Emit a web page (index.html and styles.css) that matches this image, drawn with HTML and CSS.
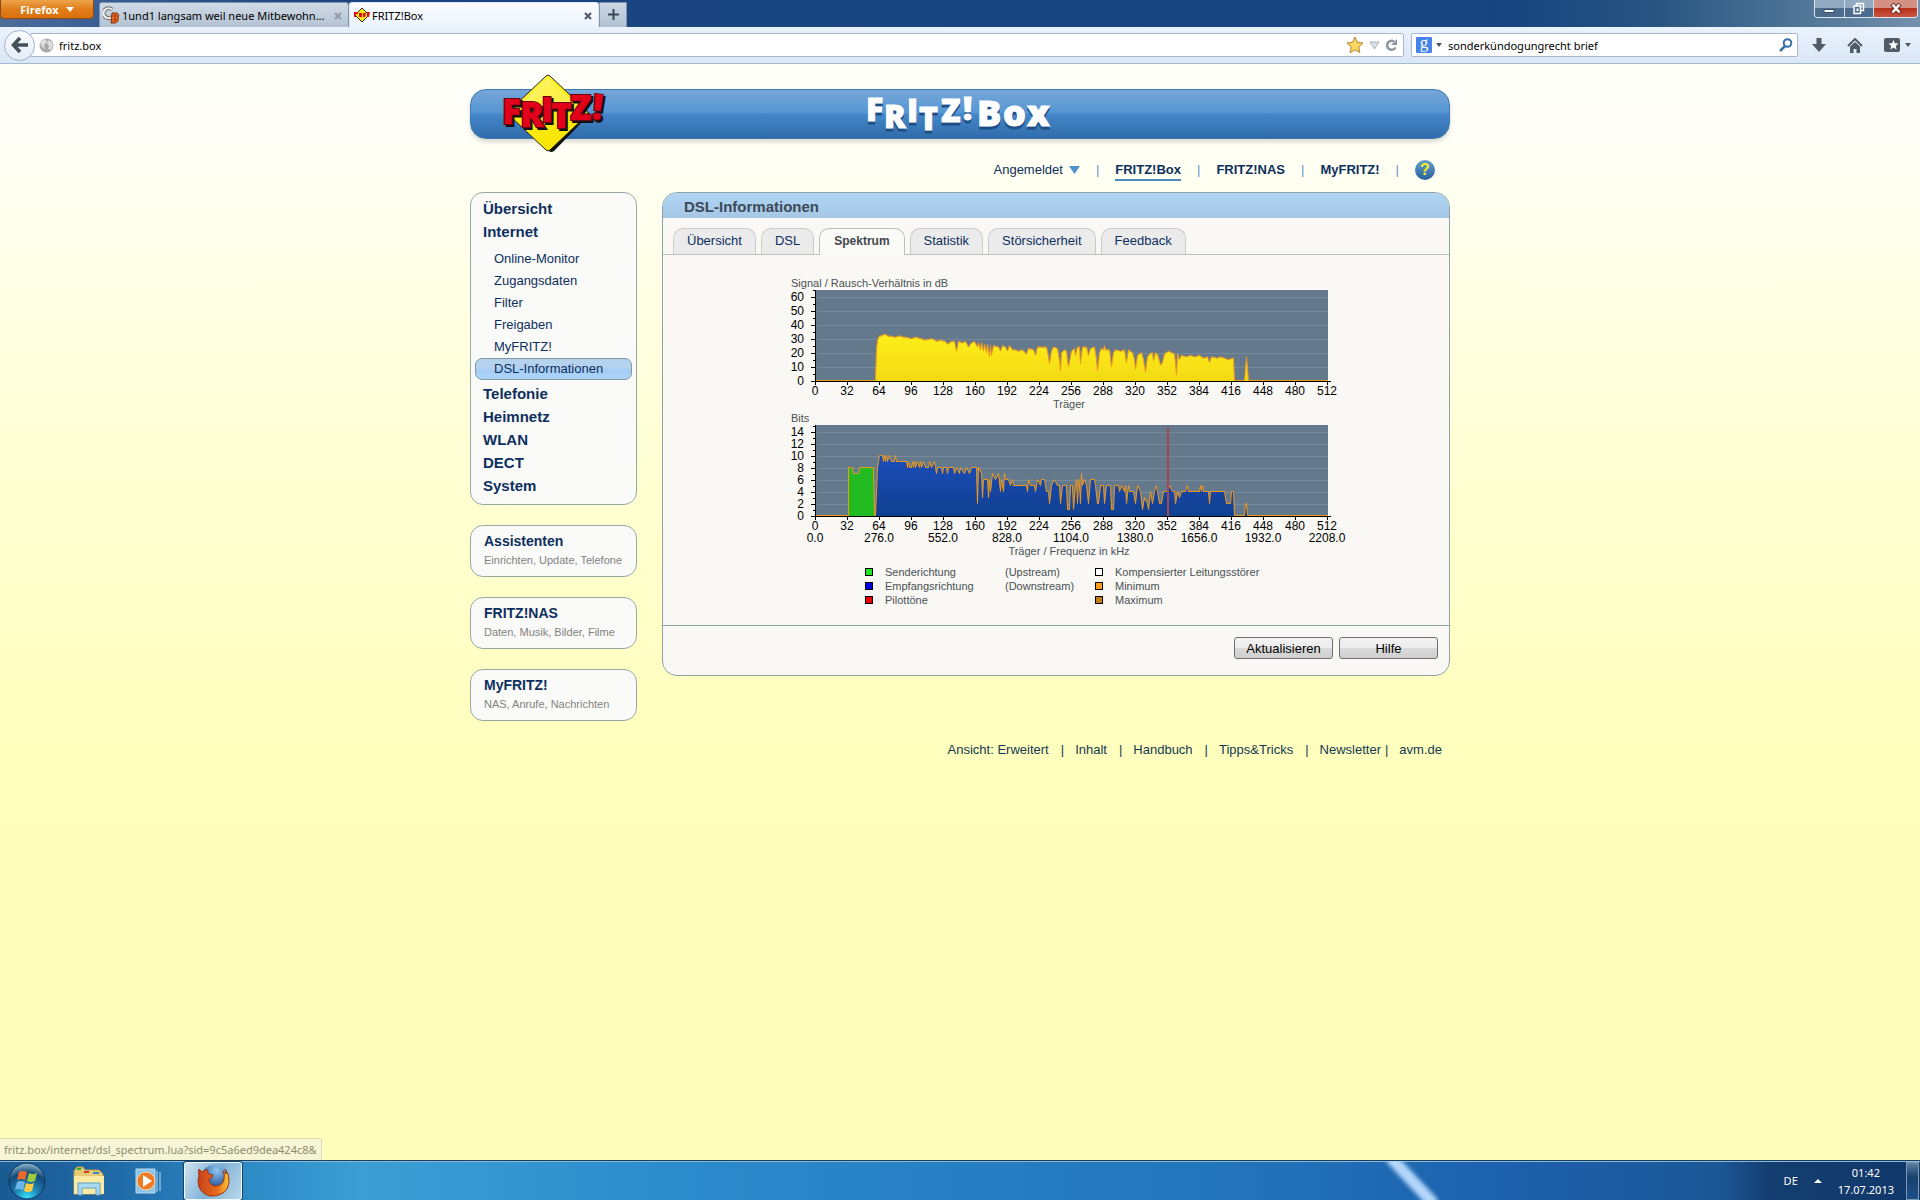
FILE: index.html
```html
<!DOCTYPE html>
<html lang="de">
<head>
    <meta charset="UTF-8">
    <meta name="viewport" content="width=device-width, initial-scale=1.0">
    <title>FRITZ!Box</title>
    <link rel="stylesheet" href="styles.css">
</head>
<body>
    <header class="browser">
        <div class="titlebar">
            <button class="firefox-btn" type="button">Firefox <i class="caret"></i></button>
            <div class="tabs">
                <div class="tab">
                    <svg width="18" height="18" viewBox="0 0 18 18">
                        <path d="M9 3.500A5 5 0 1 0 9 11" fill="none" stroke="#666" stroke-width="4"/>
                        <path d="M9 3.500A5 5 0 1 0 9 11" fill="none" stroke="#f4f4f4" stroke-width="2"/>
                        <path d="M9 7h5q3 2 1 5q1 4-3 5H8z" fill="#e2601c" stroke="#7b3410"/>
                        <path d="M11 10h2M11 13.500h2" stroke="#7b3410" stroke-width="1.500"/>
                    </svg>
                    <span class="tab-name">1und1 langsam weil neue Mitbewohn...</span>
                    <button class="tab-close" type="button" aria-label="Tab schließen"><svg width="8" height="8" viewBox="0 0 8 8"><path d="M1 1l6 6M7 1L1 7"/></svg></button>
                </div>
                <div class="tab on">
                    <svg width="18" height="16" viewBox="0 0 18 16">
                        <path d="M9 1l7 7-7 7-7-7z" fill="#fde512" stroke="#222"/>
                        <path d="M1 5h4v2H3v3H1zM6 6h3v4H6zM10 6h3l-1 4h-2zM14 5h3l-1 5h-2z" fill="#d8101c"/>
                    </svg>
                    <span class="tab-name">FRITZ!Box</span>
                    <button class="tab-close" type="button" aria-label="Tab schließen"><svg width="8" height="8" viewBox="0 0 8 8"><path d="M1 1l6 6M7 1L1 7"/></svg></button>
                </div>
                <button class="tab-new" type="button" aria-label="Neuer Tab"><svg width="11" height="11" viewBox="0 0 11 11"><path d="M5.500 0v11M0 5.500h11" stroke="#3b4754" stroke-width="2"/></svg></button>
            </div>
            <div class="win-btns">
                <button class="win-btn" type="button" aria-label="Minimieren"><svg width="12" height="10" viewBox="0 0 12 10"><path d="M1 5.500h10v3H1z" fill="#fff" stroke="#3b4a5c"/></svg></button>
                <button class="win-btn" type="button" aria-label="Verkleinern"><svg width="13" height="13" viewBox="0 0 13 13"><path d="M4.500 1.500h7v7h-7z" fill="none" stroke="#fff" stroke-width="1.500"/><path d="M2 4h6.500v7.500H2z" fill="#56718f" stroke="#fff" stroke-width="1.500"/><path d="M4.500 6.500h2v2.500h-2z" fill="#fff"/></svg></button>
                <button class="win-btn close" type="button" aria-label="Schließen"><svg width="12" height="11" viewBox="0 0 12 11"><path d="M2 1l8 9M10 1L2 10" stroke="#6b2b26" stroke-width="4.500"/><path d="M2.500 1.500l7 8M9.500 1.500l-7 8" stroke="#fff" stroke-width="2.500"/></svg></button>
            </div>
        </div>
        <div class="toolbar">
            <button class="back" type="button" aria-label="Zurück"><svg width="18" height="18" viewBox="0 0 18 18"><path d="M9 2L2.500 9 9 16M3 9h14" fill="none" stroke="#454f5b" stroke-width="3.500"/></svg></button>
            <div class="field url">
                <svg width="15" height="15" viewBox="0 0 15 15"><circle cx="7.500" cy="7.500" r="7" fill="#a9a9a9"/><path d="M2 3l4-2 2 3-3 3 1 4-3-2-2-4zM9 2l4 2 1 4-2 4-3-1 1-3-2-3z" fill="#dcdcdc"/></svg>
                <input type="text" value="fritz.box" aria-label="Adresse">
                <svg width="18" height="18" viewBox="0 0 18 18"><path d="M9 1l2.400 5.300 5.600.7-4.200 3.900 1.100 5.800L9 13.800l-4.900 2.900 1.100-5.800L1 7l5.600-.7z" fill="#fbd661" stroke="#b98432"/></svg>
                <svg width="11" height="9" viewBox="0 0 11 9"><path d="M1 1h9L5.500 8z" fill="#dce1e6" stroke="#a9b0b8"/></svg>
                <svg width="13" height="14" viewBox="0 0 13 14"><path d="M10.500 9.500A4.500 4.500 0 1 1 9 3.500" fill="none" stroke="#8d969e" stroke-width="2.500"/><path d="M12 1v6H6z" fill="#8d969e"/></svg>
            </div>
            <div class="field search">
                <span class="google">g</span><i class="caret dark"></i>
                <input type="text" value="sonderkündogungrecht brief" aria-label="Suche">
                <svg width="14" height="14" viewBox="0 0 14 14"><circle cx="8.500" cy="5" r="3.800" fill="none" stroke="#3a70a6" stroke-width="2"/><path d="M6 8l-5 5" stroke="#3a70a6" stroke-width="2.500"/></svg>
            </div>
            <div class="tools">
                <svg width="14" height="14" viewBox="0 0 14 14"><path d="M4.500 0h5v6H14L7 14 0 6h4.500z" fill="#515b66"/></svg>
                <svg width="16" height="15" viewBox="0 0 16 15"><path d="M1 8l7-7 7 7" fill="none" stroke="#515b66" stroke-width="2"/><path d="M3 8.500L8 4l5 4.500V15H9.500v-4h-3v4H3z" fill="#515b66"/></svg>
                <span class="marks"><svg width="16" height="14" viewBox="0 0 16 14"><rect width="16" height="14" rx="2" fill="#515b66"/><path d="M9.500 2l1.400 3.300 3.600.3-2.700 2.300.8 3.600-3.100-1.900-3.100 1.900.8-3.600-2.700-2.300 3.600-.3z" fill="#fff"/></svg><i class="caret dark"></i></span>
            </div>
        </div>
    </header>

    <main class="page">
        <div class="wrap">
            <div class="banner">
                <svg class="logo" width="104" height="84" viewBox="0 0 104 84">
                    <defs>
                        <linearGradient id="gold" x1="0" y1="0" x2="1" y2="1"><stop offset="0" stop-color="#fffb9a"/><stop offset=".35" stop-color="#fced12"/><stop offset="1" stop-color="#f9e000"/></linearGradient>
                    </defs>
                    <path d="M46 3l40 37-36 37q-3 2-5 0L10 42z" fill="#111"/>
                    <path d="M42 2q2-2 4 0l37 35q2 2 0 4L46 76q-2 2-4 0L5 41q-2-2 0-4z" fill="url(#gold)" stroke="#222"/>
                    <path d="M44 4L12 35q12-14 62-3z" fill="#fff" opacity=".25"/>
                    <g class="logo-shadow"><text x="0 18 39 49 68" y="52 55 50 56 48">FRITZ</text><text x="90" y="47" transform="rotate(6 92 40)">!</text></g>
                    <g class="logo-text"><text x="-2 16 37 47 66" y="50 53 48 54 46">FRITZ</text><text x="88" y="45" transform="rotate(6 90 38)">!</text></g>
                </svg>
                <svg class="brand" width="188" height="48" viewBox="0 0 188 48">
                    <g class="brand-shadow"><text x="0 18 41 53 75 97" y="34 41 35 43 35 33">FRITZ!</text><text class="large" x="111 137 161" y="39 39 39">Box</text></g>
                    <g class="brand-text"><text x="0 18 41 53 75 97" y="31 38 32 40 32 30">FRITZ!</text><text class="large" x="111 137 161" y="36 36 36">Box</text></g>
                </svg>
            </div>

            <nav class="top-nav">
                <a href="#">Angemeldet <svg width="11" height="8" viewBox="0 0 11 8"><path d="M0 0h11L5.500 8z" fill="#4f92cf"/></svg></a><span>|</span>
                <a class="strong on" href="#">FRITZ!Box</a><span>|</span>
                <a class="strong" href="#">FRITZ!NAS</a><span>|</span>
                <a class="strong" href="#">MyFRITZ!</a><span>|</span>
                <a class="help" href="#" aria-label="Hilfe">?</a>
            </nav>

            <div class="cols">
                <aside class="side">
                    <nav class="box menu">
                        <a href="#">Übersicht</a>
                        <a href="#">Internet</a>
                        <div class="sub">
                            <a href="#">Online-Monitor</a>
                            <a href="#">Zugangsdaten</a>
                            <a href="#">Filter</a>
                            <a href="#">Freigaben</a>
                            <a href="#">MyFRITZ!</a>
                            <a class="on" href="#">DSL-Informationen</a>
                        </div>
                        <a href="#">Telefonie</a>
                        <a href="#">Heimnetz</a>
                        <a href="#">WLAN</a>
                        <a href="#">DECT</a>
                        <a href="#">System</a>
                    </nav>
                    <a class="box link" href="#"><b>Assistenten</b><span>Einrichten, Update, Telefone</span></a>
                    <a class="box link" href="#"><b>FRITZ!NAS</b><span>Daten, Musik, Bilder, Filme</span></a>
                    <a class="box link" href="#"><b>MyFRITZ!</b><span>NAS, Anrufe, Nachrichten</span></a>
                </aside>

                <section class="panel">
                    <h1>DSL-Informationen</h1>
                    <nav class="panel-tabs">
                        <a href="#">Übersicht</a>
                        <a href="#">DSL</a>
                        <a class="on" href="#">Spektrum</a>
                        <a href="#">Statistik</a>
                        <a href="#">Störsicherheit</a>
                        <a href="#">Feedback</a>
                    </nav>
                    <div class="charts">
                        <svg class="chart" id="snr" width="570" height="135"></svg>
                        <svg class="chart" id="bits" width="570" height="148"></svg>
                        <div class="legend">
                            <i class="c-up"></i><span>Senderichtung</span><span>(Upstream)</span><i class="c-comp"></i><span>Kompensierter Leitungsstörer</span>
                            <i class="c-down"></i><span>Empfangsrichtung</span><span>(Downstream)</span><i class="c-min"></i><span>Minimum</span>
                            <i class="c-pilot"></i><span>Pilottöne</span><span></span><i class="c-max"></i><span>Maximum</span>
                        </div>
                    </div>
                    <div class="buttons">
                        <button type="button">Aktualisieren</button>
                        <button type="button">Hilfe</button>
                    </div>
                </section>
            </div>

            <footer class="foot">
                <a href="#">Ansicht: Erweitert</a><span>|</span>
                <a href="#">Inhalt</a><span>|</span>
                <a href="#">Handbuch</a><span>|</span>
                <a href="#">Tipps&amp;Tricks</a><span>|</span>
                <a href="#">Newsletter</a><span class="near">|</span>
                <a href="#">avm.de</a>
            </footer>
        </div>
        <div class="status">fritz.box/internet/dsl_spectrum.lua?sid=9c5a6ed9dea424c8&amp;</div>
    </main>

    <div class="taskbar">
        <svg class="flare" width="60" height="39" viewBox="0 0 60 39"><path d="M10 -4L54 43" stroke="#b4d7fa" stroke-width="12"/></svg>
        <button class="start" type="button" aria-label="Start">
            <svg width="38" height="38" viewBox="0 0 38 38">
                <defs><radialGradient id="orb" cx=".5" cy=".95" r=".9"><stop offset="0" stop-color="#35e0fa"/><stop offset=".4" stop-color="#1c7cae"/><stop offset=".75" stop-color="#124a78"/><stop offset="1" stop-color="#7ea6bf"/></radialGradient></defs>
                <circle cx="19" cy="19" r="18" fill="url(#orb)" stroke="#0d3558"/>
                <path d="M11 10q4-2 8 0l-2 8q-4-2-8 0z" fill="#ee6a2c"/><path d="M21 11q4 2 8 0l-2 8q-4 2-8 0z" fill="#9ccb3c"/>
                <path d="M9 20q4-2 8 0l-2 8q-4-2-8 0z" fill="#6cb6ec"/><path d="M18 21q4 2 8 0l-2 8q-4 2-8 0z" fill="#fccb3f"/>
            </svg>
        </button>
        <button class="task" type="button" aria-label="Explorer">
            <svg width="34" height="30" viewBox="0 0 34 30">
                <path d="M2 5l3-4h6l2 3h14l4 4v20H2z" fill="#e6cb74" stroke="#b59a4c"/>
                <path d="M5 2h4v2H5z" fill="#35a82e"/><path d="M12 5h5v2h-5z" fill="#d23b2a"/><path d="M21 6h6v2h-6z" fill="#3b86c9"/>
                <path d="M2 10h30v18H2z" fill="#fbe9a6"/>
                <path d="M6 29V17h22v12h-4v-7H10v7z" fill="#a9d9ef" stroke="#5fa3c6"/>
            </svg>
        </button>
        <button class="task" type="button" aria-label="Media Player">
            <svg width="28" height="26" viewBox="0 0 28 26">
                <path d="M25 4v19M22 3v21" stroke="#b9dcf2"/><path d="M1 1h19v24H1z" fill="#8dc3e6" stroke="#b9dcf2"/>
                <circle cx="11" cy="13" r="9" fill="#f07a22" stroke="#fbd3ac"/><path d="M8 7l9 6-9 6z" fill="#fff"/>
            </svg>
        </button>
        <button class="task on" type="button" aria-label="Firefox">
            <svg width="34" height="34" viewBox="0 0 34 34">
                <defs><radialGradient id="globe" cx=".6" cy=".2" r=".8"><stop offset="0" stop-color="#8fc8f2"/><stop offset="1" stop-color="#143c86"/></radialGradient>
                <linearGradient id="fox" x1="0" x2="1"><stop offset="0" stop-color="#c8401a"/><stop offset=".6" stop-color="#e66a1c"/><stop offset="1" stop-color="#fcc534"/></linearGradient></defs>
                <circle cx="18" cy="14" r="13" fill="url(#globe)"/>
                <path d="M3 5l3 3q3-3 6-2-1 3 1 4l4 1q0 3-4 4 0 6 6 7 8 0 9-7 1-4-1-8 2 1 3 3 1-2-1-5 5 6 4 13-1 8-6 11-6 4-13 3-8-2-11-9-2-6 0-11-1-4 0-7z" fill="url(#fox)" stroke="#9c3512"/>
            </svg>
        </button>
        <div class="tray">
            <span>DE</span>
            <i class="caret up"></i>
            <div class="clock">01:42<br>17.07.2013</div>
        </div>
        <button class="desk" type="button" aria-label="Desktop anzeigen"></button>
    </div>

    <script>
    // [Träger, Wert]
    const SNR = [[0,0],[60,0],[61,22],[62,29],[64,32],[67,32],[68,33],[70,33],[72,32],[80,31],[84,32],[88,31],[90,31],[96,30],[100,31],[110,29],[116,30],[122,28],[124,29],[130,28],[132,26],[136,28],[139,28],[141,21],[143,28],[147,27],[150,28],[153,24],[156,27],[159,28],[162,24],[163,27],[165,22],[166,27],[168,21],[169,26],[171,20],[172,26],[174,17],[175,25],[176,18],[178,25],[183,24],[185,21],[187,25],[190,24],[192,21],[194,25],[197,22],[200,22],[203,21],[207,22],[211,19],[213,23],[218,22],[220,18],[222,24],[231,24],[233,17],[234,12],[236,21],[238,24],[242,23],[244,14],[245,7],[246,20],[249,22],[251,21],[252,14],[253,10],[255,17],[256,21],[259,23],[260,18],[262,24],[264,24],[265,12],[267,24],[271,24],[273,18],[275,23],[279,24],[281,15],[282,7],[284,20],[286,23],[288,22],[289,25],[290,22],[294,22],[296,10],[298,20],[300,22],[305,21],[309,22],[311,13],[313,22],[317,20],[319,15],[320,8],[322,18],[326,20],[328,15],[330,6],[332,17],[334,19],[337,20],[338,14],[340,20],[342,19],[344,14],[345,11],[347,13],[349,19],[353,21],[356,20],[359,19],[361,4],[362,19],[364,15],[366,18],[371,17],[375,18],[379,17],[384,18],[388,16],[392,17],[394,13],[396,17],[402,16],[405,17],[409,16],[413,15],[417,16],[418,16],[419,0],[429,0],[431,17],[433,0],[512,0]];
    const UP = [[33,0],[33,8],[37,8],[38,7],[43,7],[44,8],[58,8],[59,0]];
    const DOWN = [[60,0],[62,8],[64,10],[67,10],[68,9],[69,10],[70,9],[71,10],[72,9],[74,10],[76,9],[79,9],[80,10],[81,9],[91,9],[92,8],[93,9],[94,8],[96,8],[97,9],[98,8],[99,9],[100,8],[102,9],[104,8],[105,9],[106,8],[108,9],[110,8],[113,8],[114,9],[116,8],[119,9],[120,8],[121,7],[122,8],[126,8],[127,7],[128,8],[131,8],[132,7],[133,8],[138,8],[139,7],[141,8],[144,7],[145,8],[149,7],[151,8],[154,7],[156,8],[161,8],[162,2],[163,8],[166,7],[167,3],[168,6],[172,6],[173,3],[174,6],[175,4],[177,7],[180,6],[183,7],[185,4],[186,6],[188,4],[189,7],[190,6],[193,6],[195,5],[197,6],[198,5],[211,5],[212,4],[213,6],[215,5],[219,5],[220,4],[222,6],[225,5],[226,6],[229,6],[231,4],[233,4],[234,2],[236,5],[239,6],[242,5],[244,5],[245,2],[247,5],[251,5],[252,1],[254,1],[255,5],[257,5],[258,1],[260,5],[261,6],[262,2],[263,6],[264,5],[265,2],[266,7],[267,5],[269,6],[271,5],[273,2],[275,6],[279,6],[280,5],[282,2],[283,2],[285,5],[288,5],[289,2],[291,5],[295,5],[296,1],[298,1],[299,5],[303,5],[304,4],[306,5],[309,4],[310,5],[311,2],[313,5],[314,4],[318,4],[320,2],[322,5],[325,4],[327,1],[329,3],[332,2],[333,1],[335,4],[337,2],[339,4],[341,5],[342,4],[344,2],[346,2],[348,4],[352,4],[354,5],[357,4],[359,4],[360,2],[362,4],[364,3],[366,4],[370,4],[372,5],[373,4],[384,4],[385,5],[386,4],[387,5],[388,4],[393,4],[394,2],[395,4],[409,4],[411,2],[415,2],[416,4],[418,4],[419,0],[429,0],[430,2],[431,2],[432,0]];

    class Chart {
        constructor(el, opt) {
            this.el = el;
            this.x0 = 24;
            this.y0 = 106;
            this.opt = opt;
            this.out = '';
            this.init();
        }

        path(data, base) {
            return data.map(([c, v], i) => (i ? 'L' : 'M') + (this.x0 + c + .5) + ' ' + (this.y0 - base - v * this.opt.unit)).join('');
        }

        area(data, fill) {
            this.out += `<path d="${this.path(data, 0)}Z" fill="${fill}"/>`;
            this.out += `<path class="edge" d="${this.path(data, .5)}"/>`;
        }

        text(x, y, str, cls) {
            this.out += `<text x="${x}" y="${y}" class="${cls}">${str}</text>`;
        }

        init() {
            const {title, label, labelY, step, max, unit, freq, areas} = this.opt;
            const {x0, y0} = this;
            this.out += `<defs><linearGradient id="yellow" x1="0" y1="0" x2="0" y2="1"><stop offset="0" stop-color="#ffee1a"/><stop offset="1" stop-color="#f3da14"/></linearGradient><linearGradient id="blue" x1="0" y1="0" x2="0" y2="1"><stop offset="0" stop-color="#1b4dbb"/><stop offset="1" stop-color="#114090"/></linearGradient></defs>`;
            this.text(0, 12, title, 'cap');
            this.out += `<rect x="${x0 + 1}" y="15" width="512" height="91" fill="#65798c"/>`;
            for (let v = 0; v <= max; v += step) {
                const y = y0 - v * unit;
                if (v) this.out += `<path class="grid" d="M${x0 + 2} ${y + .5}h511"/>`;
                this.out += `<path class="axis" d="M${x0 - 4} ${y + .5}h5M${x0 - 2} ${y - step * unit / 2 + .5}h3"/>`;
                this.text(x0 - 11, y + 4, v, 'num end');
            }
            this.out += `<path class="edge" d="M${x0 + 1} ${y0 - .5}h512"/>`;
            areas.forEach(a => this.area(a[0], a[1]));
            if (freq) this.out += `<path d="M${x0 + 353} 17V${y0}" stroke="#a8464f" stroke-width="2"/>`;
            this.out += `<path class="axis" d="M${x0 + .5} 15V${y0 + 4}M${x0} ${y0 + .5}h516"/>`;
            for (let c = 0; c <= 512; c += 32) {
                this.out += `<path class="axis" d="M${x0 + c + .5} ${y0}v4"/>`;
                this.text(x0 + c, y0 + 14, c, 'num');
                if (freq && c % 64 === 0) this.text(x0 + c, y0 + 26, (c * 4.3125).toFixed(1), 'num');
            }
            this.text(x0 + 254, labelY, label, 'cap mid');
            this.el.innerHTML = this.out;
        }
    }

    new Chart(document.querySelector('#snr'), {title: 'Signal / Rausch-Verhältnis in dB', label: 'Träger', labelY: 133, step: 10, max: 60, unit: 1.4, areas: [[SNR, 'url(#yellow)']]});
    new Chart(document.querySelector('#bits'), {title: 'Bits', label: 'Träger / Frequenz in kHz', labelY: 145, step: 2, max: 14, unit: 6, freq: true, areas: [[UP, '#22bb22'], [DOWN, 'url(#blue)']]});
    </script>
</body>
</html>
```

FILE: styles.css
```css
* {padding: 0;margin: 0;box-sizing: border-box;}
body {min-height: 100vh;display: flex;flex-direction: column;font-family: "Liberation Sans", Arial, sans-serif;font-size: 13px;color: #0d2f5e;}
a {color: inherit;text-decoration: none;}
button {font-family: inherit;border: 0;background: none;}
svg {flex: none;}

.caret {display: inline-block;border: 4px solid transparent;border-top: 5px solid #fff;border-bottom: 0;}
.caret.dark {border-width: 3px;border-top: 4px solid #4d555d;border-bottom: 0;}
.caret.up {border-top: 0;border-bottom: 4px solid #fff;}

/* browser */
.browser {font-family: "Noto Sans", "Open Sans", sans-serif;font-size: 12px;color: #000;}
.titlebar {height: 27px;display: flex;align-items: flex-start;background: linear-gradient(90deg, #4c6d9b 0, #3f6397 70px, #1b4680 300px, #174480 1500px, #265380 1650px, #4f7596 1800px, #7391ac);}
.firefox-btn {width: 94px;height: 19px;margin-right: 5px;display: flex;align-items: center;justify-content: center;gap: 7px;background: linear-gradient(#eda44c, #e07e1a 50%, #d9700c);border: 1px solid #8f4a13;border-top: 0;border-radius: 0 0 4px 4px;color: #fff;font: bold 11px "Open Sans", sans-serif;}
.tabs {flex: 1;display: flex;align-self: flex-end;}
.tab {width: 250px;height: 25px;padding: 0 6px 0 3px;display: flex;align-items: center;gap: 1px;background: linear-gradient(#d0dbe7, #b3c2d2);border: 1px solid #7f94ac;border-bottom: 0;border-radius: 3px 3px 0 0;}
.tab.on {background: linear-gradient(#fbfdff, #ebf3fc);border-color: #dbe8f5;}
.tab-name {flex: 1;white-space: nowrap;overflow: hidden;font-size: 11px;}
.tab-close {width: 9px;height: 18px;}
.tab-close path {stroke: #8f9aa6;stroke-width: 2;}
.tab.on .tab-close path {stroke: #4d5865;}
.tab-new {width: 28px;height: 25px;background: linear-gradient(#ccd7e4, #b1c1d2);border: 1px solid #7f94ac;border-bottom: 0;}
.win-btns {width: 104px;height: 18px;margin-right: 2px;display: flex;border: 1px solid #dce6f0;border-top: 0;border-radius: 0 0 4px 4px;overflow: hidden;}
.win-btn {flex: 2;display: flex;align-items: center;justify-content: center;background: linear-gradient(#93a9bf 50%, #4d6b8c 50%);border-right: 1px solid #cfdbe7;}
.win-btn.close {flex: 3;border: 0;background: linear-gradient(#d28f82 50%, #b8321c 50%, #c9553f);}
.toolbar {height: 37px;padding: 0 9px 0 4px;display: flex;align-items: center;background: linear-gradient(#eaf2fc, #dae7f6);border-bottom: 1px solid #a5b9d2;}
.back {position: relative;width: 31px;height: 31px;display: flex;align-items: center;justify-content: center;background: linear-gradient(#fafcfe, #e4edf7);border: 1px solid #a3b3c6;border-radius: 50%;}
.field {height: 24px;display: flex;align-items: center;background: #fff;border: 1px solid #a9b9cc;border-radius: 2px;}
.field input {flex: 1;min-width: 0;border: 0;outline: 0;background: none;font: 11px "Noto Sans", sans-serif;color: #000;}
.url {flex: 1;margin: 0 7px 0 -5px;padding: 0 5px 0 8px;gap: 5px;}
.search {width: 387px;padding: 0 4px;gap: 4px;}
.search .caret {margin-right: 2px;}
.google {width: 16px;height: 16px;background: #4683ea;border-radius: 1px;color: #fff;font: 17px/12px "Liberation Serif", serif;text-align: center;}
.tools {margin-left: 14px;display: flex;align-items: center;gap: 21px;}
.marks {display: flex;align-items: center;gap: 5px;}

/* page */
.page {flex: 1;display: flex;flex-direction: column;background: linear-gradient(#fffffa 0, #fffff8 60px, #ffffd8 350px, #ffffbe 680px, #ffffbb);}
.wrap {flex: 1;width: 980px;margin: 0 auto;padding-top: 25px;}
.banner {position: relative;height: 50px;display: flex;justify-content: center;background: linear-gradient(#76a7d8, #5595d4 48%, #4587c9 50%, #2f6cab);border: 1px solid #3e78b0;border-radius: 16px;box-shadow: 0 3px 4px rgba(0, 0, 0, .15);}
.logo {position: absolute;left: 33px;top: -16px;overflow: visible;}
.brand {overflow: visible;}
.logo text, .brand text {font-family: "Open Sans", sans-serif;font-weight: 800;font-size: 35px;}
.logo text {stroke-width: 2px;paint-order: stroke;}
.logo-text {fill: #e2001a;stroke: #6a0410;}
.logo-shadow {fill: #111;stroke: #111;}
.brand text {font-size: 32px;stroke-width: 1px;}
.brand .large {font-size: 36px;}
.brand-text {fill: #fff;stroke: #fff;}
.brand-shadow {fill: #1d4f86;stroke: #1d4f86;}

.top-nav {height: 53px;padding: 21px 15px 0 0;display: flex;align-items: flex-start;justify-content: flex-end;line-height: 20px;}
.top-nav a {height: 20px;display: flex;align-items: center;gap: 6px;}
.top-nav span {margin: 0 16px;color: #5f93c4;}
.top-nav .strong {font-weight: bold;}
.top-nav .on {box-shadow: 0 1px #4f87bf, inset 0 -1px #4f87bf;}
.top-nav .help {width: 20px;border-radius: 50%;justify-content: center;background: linear-gradient(#69a0cf, #26619c);color: #f2ee1e;font-weight: bold;font-size: 16px;}

.cols {display: flex;align-items: flex-start;gap: 25px;}
.side {width: 167px;display: flex;flex-direction: column;gap: 20px;}
.box {background: #fafaf8;border: 1px solid #98a9a3;border-radius: 13px;}
.menu {padding: 4px 4px 7px;font-size: 15px;font-weight: bold;line-height: 23px;}
.menu > a {display: block;padding-left: 8px;}
.sub {padding: 5px 0 2px;font-size: 13px;font-weight: normal;line-height: 20px;}
.sub a {display: block;padding-left: 18px;border: 1px solid transparent;border-radius: 7px;}
.sub .on {background: linear-gradient(#b5d2ef 45%, #a5cdf5 55%, #aed4f8);border-color: #7f9aa6;}
.link {height: 52px;padding: 5px 13px;}
.link b {display: block;font-size: 14px;line-height: 20px;}
.link span {display: block;font-size: 11px;line-height: 18px;color: #82827f;white-space: nowrap;}

.panel {flex: 1;background: #f9f8f4;border: 1px solid #8ca5a1;border-radius: 15px;overflow: hidden;}
.panel h1 {height: 25px;padding-left: 21px;background: linear-gradient(#b0d4f4, #a5c8e5);font-size: 15px;line-height: 27px;color: #3c4a57;}
.panel-tabs {height: 37px;padding: 0 10px;display: flex;align-items: flex-end;gap: 5px;border-bottom: 1px solid #b7c0bd;}
.panel-tabs a {height: 26px;padding: 0 13px;background: #ebebeb;border: 1px solid #c9cbca;border-bottom: 0;border-radius: 10px 10px 0 0;line-height: 24px;font-size: 13px;}
.panel-tabs .on {height: 27px;padding: 0 14px;margin-bottom: -1px;background: #fafaf6;font-weight: bold;font-size: 12px;color: #42474c;border-color: #b7c0bd;}
.charts {height: 370px;padding: 20px 0 0 128px;display: flex;flex-direction: column;}
.chart .cap {font-size: 11px;fill: #4a5055;}
.chart .num {font-size: 12px;fill: #000;text-anchor: middle;}
.chart .end {text-anchor: end;}
.chart .mid {text-anchor: middle;}
.axis {stroke: #000;fill: none;}
.grid {stroke: #778b9d;fill: none;}
.edge {stroke: #f0981a;fill: none;}
.legend {margin: 7px 0 0 74px;display: grid;grid-template-columns: 20px 120px 90px 20px auto;grid-auto-rows: 14px;align-items: center;justify-content: start;font-size: 11px;color: #4a5055;}
.legend i {width: 8px;height: 8px;border: 1px solid #000;}
.c-up {background: #1ee61e;}
.c-down {background: #0000e6;}
.c-pilot {background: #f00000;}
.c-comp {background: #fff;}
.c-min {background: #ff9d14;}
.c-max {background: #c07a20;}
.buttons {height: 50px;padding: 11px;display: flex;gap: 6px;justify-content: flex-end;align-items: flex-start;border-top: 1px solid #8ca5a1;}
.buttons button {width: 99px;height: 22px;background: linear-gradient(#f3f3f3, #ebebeb 50%, #dadada 50%, #cfcfcf);border: 1px solid #707070;border-radius: 3px;font-size: 13px;color: #000;}

.foot {margin-top: 20px;padding-right: 8px;display: flex;justify-content: flex-end;line-height: 18px;color: #143a52;}
.foot span {margin: 0 11px 0 12px;}
.foot .near {margin-left: 4px;}
.status {align-self: flex-start;height: 22px;padding: 0 4px;background: #f6f5d6;border: 1px solid #dbdab8;border-width: 1px 1px 0 0;border-radius: 0 2px 0 0;font: 11px/22px "Noto Sans", sans-serif;color: #8d8c6c;}

/* taskbar */
.taskbar {position: relative;height: 40px;display: flex;align-items: center;background: linear-gradient(90deg, #1b5b94 0, #1e67a5 100px, #2d8bc6 250px, #3c9ed4 360px, #2b8acb 700px, #2273ba 1250px, #1c61ad 1500px, #1b5796 1720px, #133d70 1770px, #12386a);border-top: 1px solid #173d5c;box-shadow: inset 0 1px #8db9d8;font-family: "Noto Sans", sans-serif;color: #fff;}
.flare {position: absolute;right: 480px;top: 0;}
.flare path {filter: blur(2px);}
.start {width: 38px;height: 38px;margin-left: 8px;}
.task {width: 60px;height: 38px;display: flex;align-items: center;justify-content: center;}
.start + .task {margin-left: 13px;}
.task.on {width: 58px;margin-left: 5px;background: linear-gradient(120deg, #cfe2f0, #7fb2d6 50%, #b9d8ec);border: 1px solid #eef7fc;border-radius: 2px;outline: 1px solid #17415f;}
.tray {margin-left: auto;display: flex;align-items: center;gap: 16px;font-size: 11px;line-height: 17px;}
.clock {text-align: center;}
.desk {width: 13px;height: 38px;margin: 0 1px 0 12px;background: linear-gradient(#5f7f9d, #17406c 40%, #1d5088);border: 1px solid #7c98b4;}
```
